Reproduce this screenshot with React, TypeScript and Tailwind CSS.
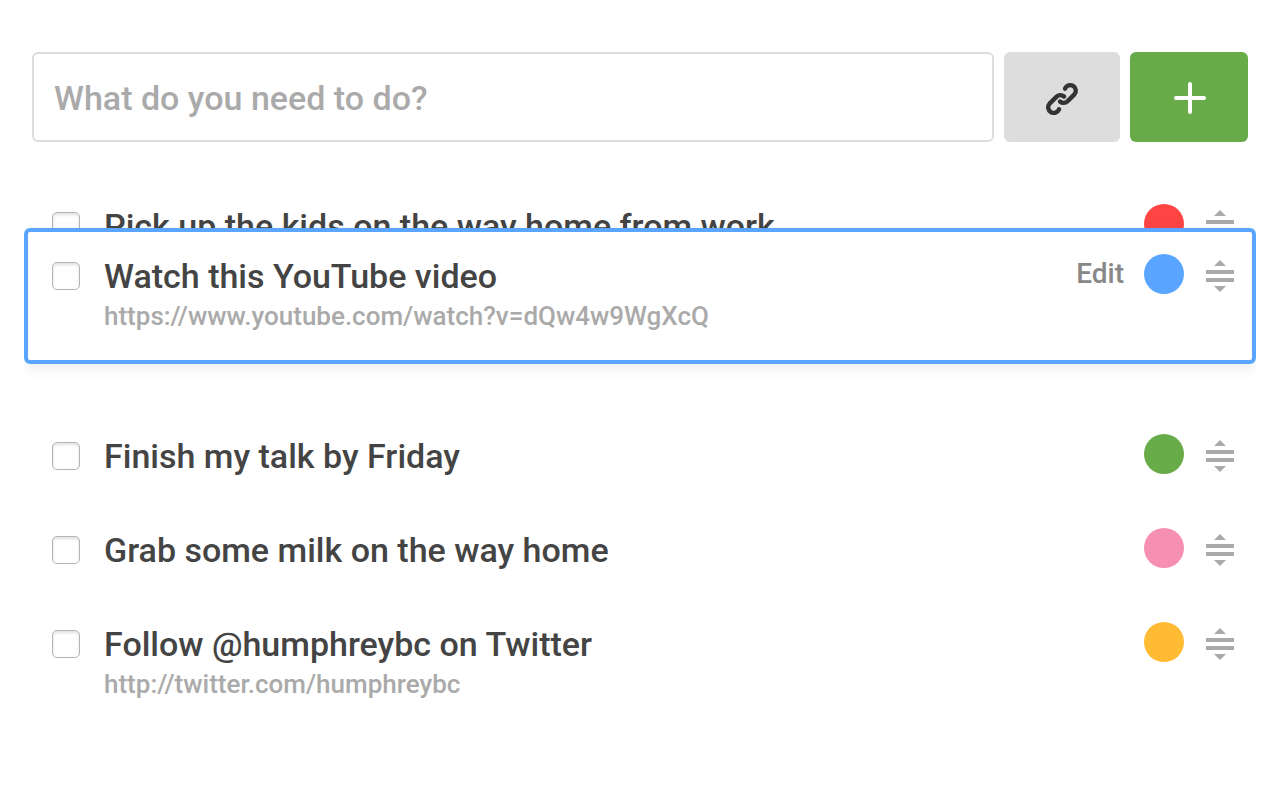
import React, { useState } from 'react';

interface Task {
  id: string;
  title: string;
  link?: string;
  color: string;
  lifted?: boolean;
}

const initialTasks: Task[] = [
  { id: 'kids', title: 'Pick up the kids on the way home from work', color: 'bg-[#ff4444]' },
  {
    id: 'video',
    title: 'Watch this YouTube video',
    link: 'https://www.youtube.com/watch?v=dQw4w9WgXcQ',
    color: 'bg-[#5aa5ff]',
    lifted: true,
  },
  { id: 'talk', title: 'Finish my talk by Friday', color: 'bg-[#68ab49]' },
  { id: 'milk', title: 'Grab some milk on the way home', color: 'bg-[#f78fb3]' },
  {
    id: 'follow',
    title: 'Follow @humphreybc on Twitter',
    link: 'http://twitter.com/humphreybc',
    color: 'bg-[#ffbb33]',
  },
];

function LinkIcon() {
  return (
    <svg viewBox="14 9 36 36" className="size-9" fill="none" stroke="#333333" strokeWidth="4.4" strokeLinecap="round" aria-hidden="true">
      <path d="M35 18.6A5.6 5.6 0 1 1 44.4 24.4L37.4 31.4A5.5 5.5 0 0 1 30 31.5" />
      <path d="M29 39.4A5.6 5.6 0 1 1 19.6 33.6L26.6 26.6A5.5 5.5 0 0 1 34 26.5" />
    </svg>
  );
}

function PlusIcon() {
  return (
    <svg viewBox="0 0 36 36" className="size-9" fill="none" stroke="#ffffff" strokeWidth="4" strokeLinecap="round" aria-hidden="true">
      <path d="M19 5v28M5 19h28" />
    </svg>
  );
}

function HandleIcon() {
  return (
    <svg viewBox="0 0 28 32" className="h-8 w-7" fill="#aaaaaa" aria-hidden="true">
      <path d="M14 0l6 6H8zM0 10h28v4H0zM0 18h28v4H0zM8 26h12l-6 6z" />
    </svg>
  );
}

function TaskRow({ task }: { task: Task }) {
  const [done, setDone] = useState(false);
  return (
    <div className="flex items-start pt-[26px] pr-[22px] pb-[26px] pl-7">
      <input
        id={task.id}
        type="checkbox"
        checked={done}
        onChange={(e) => setDone(e.target.checked)}
        className="mt-2 size-7 shrink-0 appearance-none rounded-[5px] border border-[#b4b4b4] bg-white shadow-[inset_0_2px_3px_rgba(0,0,0,0.12)] checked:bg-[#5aa5ff]"
      />
      <div className="ml-6 min-w-0 flex-1">
        <label htmlFor={task.id} className="block pt-0.5 text-[34px] leading-10 text-[#444444]">
          {task.title}
        </label>
        {task.link && (
          <a href={task.link} className="block text-[26px] leading-10 text-[#aaaaaa]">
            {task.link}
          </a>
        )}
      </div>
      {task.lifted && (
        <button type="button" className="mr-5 text-[28px] leading-10 text-[#888888]">
          Edit
        </button>
      )}
      <button type="button" aria-label="Change colour" className={`size-10 shrink-0 rounded-full ${task.color}`} />
      <button type="button" aria-label="Reorder" className="mt-1.5 ml-[22px] h-8 shrink-0 cursor-grab">
        <HandleIcon />
      </button>
    </div>
  );
}

export default function App() {
  const [text, setText] = useState('');
  return (
    <main className="min-h-screen bg-white pt-[52px] font-['Roboto',sans-serif] font-medium">
      <form className="flex gap-2.5 px-8" onSubmit={(e) => e.preventDefault()}>
        <input
          type="text"
          aria-label="New task"
          placeholder="What do you need to do?"
          value={text}
          onChange={(e) => setText(e.target.value)}
          className="h-[90px] min-w-0 flex-1 rounded-md border-2 border-[#dddddd] px-5 pt-0.5 text-[34px] text-[#444444] outline-none placeholder:text-[#aaaaaa]"
        />
        <button type="button" aria-label="Add link" className="flex w-[116px] items-center justify-center rounded-md bg-[#dddddd]">
          <LinkIcon />
        </button>
        <button type="submit" aria-label="Add task" className="flex w-[118px] items-center justify-center rounded-md bg-[#68ab49]">
          <PlusIcon />
        </button>
      </form>
      <ul className="mx-6 mt-9 overflow-x-clip">
        {initialTasks.map((task) =>
          task.lifted ? (
            <li key={task.id} className="relative h-[136px]">
              <div className="absolute inset-x-0 -top-11 h-[136px] rounded-md bg-white shadow-[0_4px_16px_rgba(0,0,0,0.08)]">
                <TaskRow task={task} />
                <div className="pointer-events-none absolute inset-0 rounded-md border-4 border-[#5aa5ff]" />
              </div>
            </li>
          ) : (
            <li key={task.id}>
              <TaskRow task={task} />
            </li>
          ),
        )}
      </ul>
    </main>
  );
}
